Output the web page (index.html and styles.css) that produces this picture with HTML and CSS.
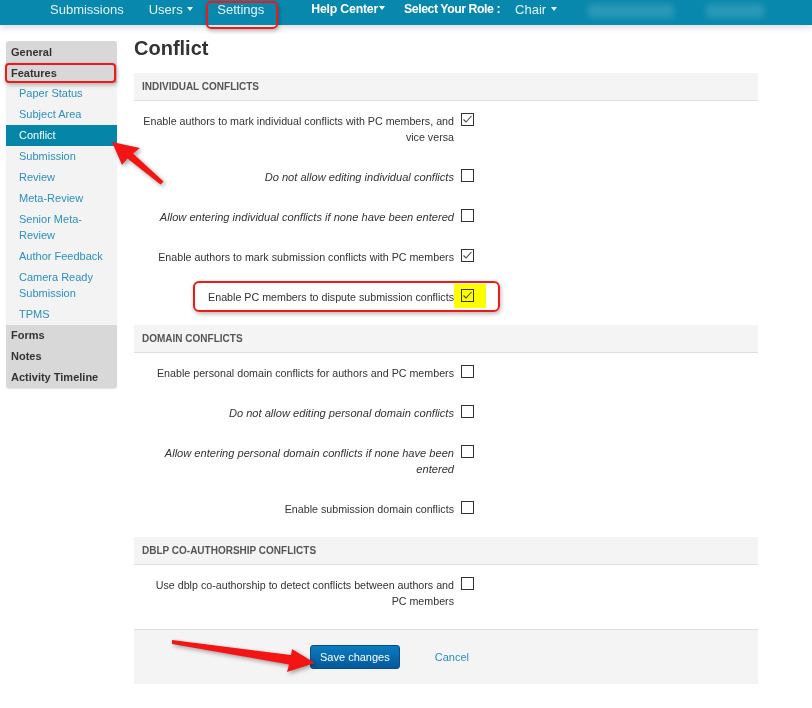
FILE: index.html
```html
<!DOCTYPE html>
<html>
<head>
<meta charset="utf-8">
<title>Conflict settings</title>
<link rel="stylesheet" href="styles.css">
</head>
<body>
<nav class="topbar">
  <a class="nav-item">Submissions</a>
  <a class="nav-item m-users">Users <span class="caret"></span></a>
  <a class="nav-item m-settings">Settings</a>
  <a class="nav-item strong m-help">Help Center<span class="caret tight"></span></a>
  <span class="nav-item strong m-role">Select Your Role :</span>
  <a class="nav-item m-chair">Chair <span class="caret"></span></a>
  <span class="blur b1"></span>
  <span class="blur b2"></span>
</nav>

<div class="page">
  <aside class="sidebar">
    <div class="side-head">General</div>
    <div class="side-head">Features</div>
    <ul class="side-list">
      <li>Paper Status</li>
      <li>Subject Area</li>
      <li class="active">Conflict</li>
      <li>Submission</li>
      <li>Review</li>
      <li>Meta-Review</li>
      <li>Senior Meta-Review</li>
      <li>Author Feedback</li>
      <li>Camera Ready Submission</li>
      <li>TPMS</li>
    </ul>
    <div class="side-head low">Forms</div>
    <div class="side-head low">Notes</div>
    <div class="side-head low">Activity Timeline</div>
  </aside>

  <main class="content">
    <h1 class="title">Conflict</h1>

    <section class="group">
      <div class="group-head">Individual Conflicts</div>
      <div class="opt">
        <span class="opt-label">Enable authors to mark individual conflicts with PC members, and vice versa</span>
        <svg class="cb" viewBox="0 0 13 13"><rect x="0.5" y="0.5" width="12" height="12"/><polyline points="2.5,6.5 5,9 10.5,3"/></svg>
      </div>
      <div class="opt">
        <span class="opt-label em">Do not allow editing individual conflicts</span>
        <svg class="cb" viewBox="0 0 13 13"><rect x="0.5" y="0.5" width="12" height="12"/></svg>
      </div>
      <div class="opt">
        <span class="opt-label em">Allow entering individual conflicts if none have been entered</span>
        <svg class="cb" viewBox="0 0 13 13"><rect x="0.5" y="0.5" width="12" height="12"/></svg>
      </div>
      <div class="opt">
        <span class="opt-label">Enable authors to mark submission conflicts with PC members</span>
        <svg class="cb" viewBox="0 0 13 13"><rect x="0.5" y="0.5" width="12" height="12"/><polyline points="2.5,6.5 5,9 10.5,3"/></svg>
      </div>
      <div class="opt">
        <span class="opt-label">Enable PC members to dispute submission conflicts</span>
        <svg class="cb" viewBox="0 0 13 13"><rect x="0.5" y="0.5" width="12" height="12"/><polyline points="2.5,6.5 5,9 10.5,3"/></svg>
      </div>
    </section>

    <section class="group">
      <div class="group-head">Domain Conflicts</div>
      <div class="opt">
        <span class="opt-label">Enable personal domain conflicts for authors and PC members</span>
        <svg class="cb" viewBox="0 0 13 13"><rect x="0.5" y="0.5" width="12" height="12"/></svg>
      </div>
      <div class="opt">
        <span class="opt-label em">Do not allow editing personal domain conflicts</span>
        <svg class="cb" viewBox="0 0 13 13"><rect x="0.5" y="0.5" width="12" height="12"/></svg>
      </div>
      <div class="opt">
        <span class="opt-label em">Allow entering personal domain conflicts if none have been entered</span>
        <svg class="cb" viewBox="0 0 13 13"><rect x="0.5" y="0.5" width="12" height="12"/></svg>
      </div>
      <div class="opt">
        <span class="opt-label">Enable submission domain conflicts</span>
        <svg class="cb" viewBox="0 0 13 13"><rect x="0.5" y="0.5" width="12" height="12"/></svg>
      </div>
    </section>

    <section class="group">
      <div class="group-head">DBLP Co-Authorship Conflicts</div>
      <div class="opt">
        <span class="opt-label">Use dblp co-authorship to detect conflicts between authors and PC members</span>
        <svg class="cb" viewBox="0 0 13 13"><rect x="0.5" y="0.5" width="12" height="12"/></svg>
      </div>
    </section>

    <div class="actions">
      <button class="btn-primary">Save changes</button>
      <a class="cancel">Cancel</a>
    </div>
  </main>
</div>

<div class="annot">
  <div class="ring ring-settings"></div>
  <div class="ring ring-features"></div>
  <div class="ring ring-dispute"></div>
  <div class="marker"></div>
  <svg class="arrows" width="812" height="708" viewBox="0 0 812 708">
    <polygon points="112,142 140,148 133,153.5 163.5,181.5 160.5,184.5 127.5,158.5 122,165"/>
    <polygon points="315,663 292,649 291,655 172,640 172,644 289,664.5 287,672"/>
  </svg>
</div>
</body>
</html>
```

FILE: styles.css
```css
html, body {
  margin: 0;
  padding: 0;
}
body {
  position: relative;
  background: #ffffff;
  font-family: "Liberation Sans", Arial, sans-serif;
  color: #333333;
  width: 812px;
  height: 708px;
  overflow: hidden;
}

/* ---------- top bar ---------- */
.topbar {
  display: flex;
  align-items: flex-start;
  height: 25px;
  padding-left: 50px;
  background: #0888ad;
  box-shadow: 0 2px 7px rgba(0, 0, 0, 0.16);
  position: relative;
}
.nav-item {
  font-size: 13px;
  line-height: 15px;
  padding-top: 2px;
  color: #e6f3f7;
  white-space: nowrap;
}
.nav-item.strong {
  font-weight: bold;
  font-size: 12.3px;
  color: #ffffff;
}
.m-users { margin-left: 25px; }
.m-settings { margin-left: 24px; }
.m-help { margin-left: 47px; letter-spacing: -0.2px; }
.m-role { margin-left: 19px; letter-spacing: -0.45px; }
.m-chair { margin-left: 15px; }
.caret {
  display: inline-block;
  width: 0;
  height: 0;
  border-left: 3px solid transparent;
  border-right: 3px solid transparent;
  border-top: 4px solid #e6f3f7;
  vertical-align: 3px;
  margin-left: 1px;
}
.caret.tight { margin-left: 1px; border-top-color: #fff; }
.blur {
  display: block;
  height: 14px;
  margin-top: 4px;
  background: rgba(255, 255, 255, 0.14);
  filter: blur(3px);
  border-radius: 4px;
}
.b1 { width: 86px; margin-left: 31px; }
.b2 { width: 58px; margin-left: 32px; }

/* ---------- page ---------- */
.page {
  display: flex;
  align-items: flex-start;
  padding-left: 6px;
}

/* ---------- sidebar ---------- */
.sidebar {
  width: 111px;
  margin-top: 16px;
  background: #f3f3f3;
  border-radius: 3px;
  overflow: hidden;
  box-shadow: 0 1px 1px rgba(0, 0, 0, 0.12);
}
.side-head {
  background: #d8d8d8;
  font-size: 11px;
  font-weight: bold;
  color: #333333;
  line-height: 16px;
  padding: 3px 4px 2px 5px;
}
.side-head.low {
  padding: 2px 4px 3px 5px;
}
.side-list {
  list-style: none;
  margin: 0;
  padding: 0;
}
.side-list li {
  font-size: 11px;
  line-height: 16px;
  color: #2a8fbf;
  padding: 2px 10px 3px 13px;
}
.side-list li.active {
  background: #0586a9;
  color: #ffffff;
}

/* ---------- content ---------- */
.content {
  width: 624px;
  margin-left: 17px;
  margin-top: 11px;
}
.title {
  margin: 0 0 13px 0;
  font-size: 20px;
  line-height: 24px;
  font-weight: bold;
  color: #333333;
}
.group {
  margin-bottom: 8px;
}
.group-head {
  height: 27px;
  line-height: 27px;
  padding: 0 8px;
  background: #f4f4f4;
  border-bottom: 1px solid #dedede;
  font-size: 10px;
  font-weight: bold;
  text-transform: uppercase;
  color: #555555;
}
.opt {
  display: flex;
  align-items: flex-start;
  padding: 12px 0 12px 7px;
}
.opt-label {
  width: 313px;
  text-align: right;
  font-size: 10.7px;
  line-height: 16px;
  color: #333333;
}
.opt-label.em {
  font-style: italic;
  font-size: 11.1px;
}
.cb {
  width: 13px;
  height: 13px;
  margin-left: 7px;
  flex: none;
}
.cb rect {
  fill: none;
  stroke: #333333;
  stroke-width: 1;
}
.cb polyline {
  fill: none;
  stroke: #4a4a4a;
  stroke-width: 1.1;
}

.actions {
  display: flex;
  align-items: center;
  margin-top: 2px;
  padding: 15px 0 15px 176px;
  background: #f4f4f4;
  border-top: 1px solid #dedede;
}
.btn-primary {
  height: 24px;
  padding: 0 9px;
  font-family: "Liberation Sans", Arial, sans-serif;
  font-size: 11px;
  color: #ffffff;
  background: linear-gradient(#0a7cbf, #04599c);
  border: 1px solid #044f8a;
  border-radius: 3px;
}
.cancel {
  margin-left: 35px;
  font-size: 11px;
  color: #2a8fbf;
}

/* ---------- annotations (overlay) ---------- */
.annot {
  position: absolute;
  left: 0;
  top: 0;
  width: 812px;
  height: 708px;
  pointer-events: none;
}
.ring {
  position: absolute;
  border: 2px solid #f01818;
  box-shadow: 1px 2px 4px rgba(0, 0, 0, 0.28);
}
.ring-settings {
  left: 206px; top: 1px; width: 68px; height: 24px;
  border-radius: 5px;
}
.ring-features {
  left: 5px; top: 63px; width: 107px; height: 16px;
  border-radius: 4px;
}
.ring-dispute {
  left: 193px; top: 281px; width: 303px; height: 27px;
  border-radius: 6px;
}
.marker {
  position: absolute;
  left: 454px; top: 284px; width: 32px; height: 24px;
  background: #ffff00;
  mix-blend-mode: multiply;
}
.arrows {
  position: absolute;
  left: 0;
  top: 0;
  filter: drop-shadow(2px 2px 2px rgba(0, 0, 0, 0.35));
}
.arrows polygon {
  fill: #f51414;
}
```
